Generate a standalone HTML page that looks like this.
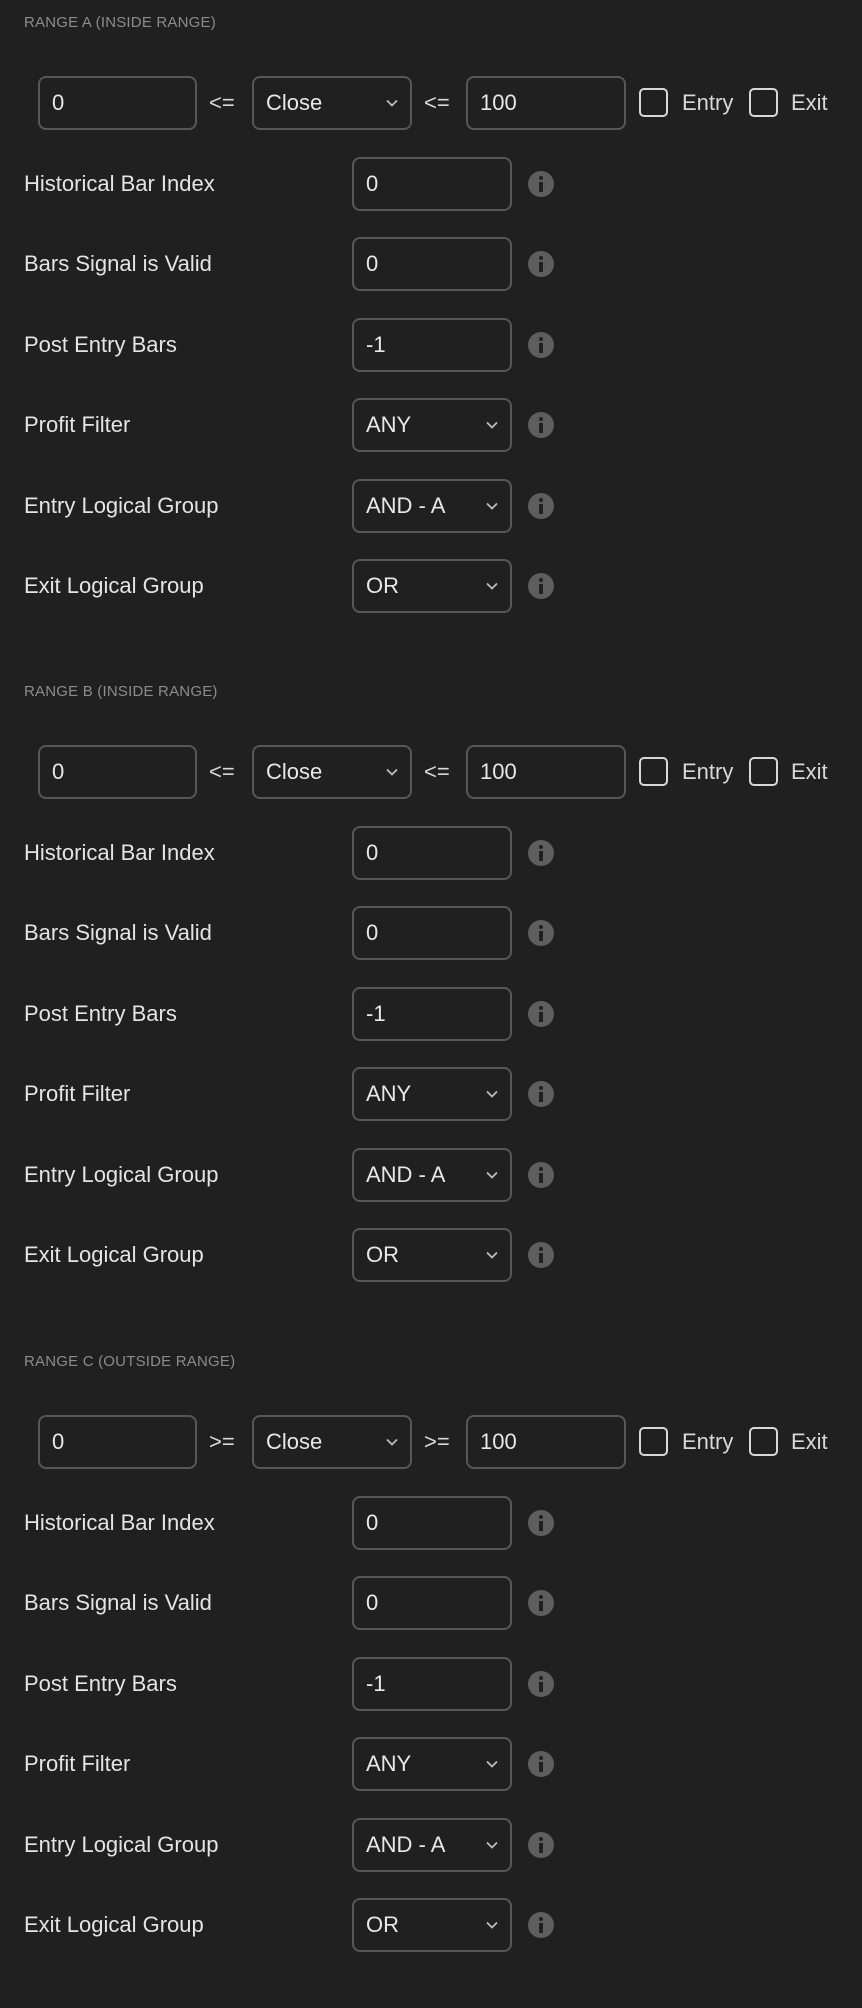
<!DOCTYPE html>
<html><head><meta charset="utf-8"><style>
*{margin:0;padding:0;box-sizing:border-box}
body{width:862px;height:2000px;background:#202020;font-family:"Liberation Sans",sans-serif;color:#e4e4e4;position:relative;overflow:hidden}
.sec{position:absolute;left:0;width:862px;height:669px}
.h{position:absolute;left:24px;top:14px;font-size:15px;color:#8c8c8c;letter-spacing:0.2px}
.box{position:absolute;height:54px;border:2px solid #575757;border-radius:8px;font-size:22px;line-height:50px;padding-left:12px;color:#e8e8e8}
.ch{position:absolute;right:12px;top:19px;width:12px;height:12px}
.op{position:absolute;font-size:22px;color:#d8d8d8;line-height:54px}
.cb{position:absolute;width:29px;height:29px;border:2px solid #d8d8d8;border-radius:5px}
.lbl{position:absolute;left:24px;font-size:22px;line-height:54px}
.info{position:absolute;left:528px;width:26px;height:26px;border-radius:50%;background:#5e5e5e}
.info:before{content:"";position:absolute;left:11px;top:5px;width:4px;height:4px;border-radius:50%;background:#202020}
.info:after{content:"";position:absolute;left:11px;top:11px;width:4px;height:10px;background:#202020}
</style></head><body>
<script>
const secs=[["RANGE A (INSIDE RANGE)","&lt;="],["RANGE B (INSIDE RANGE)","&lt;="],["RANGE C (OUTSIDE RANGE)","&gt;="]];
const rows=[["Historical Bar Index","0",0],["Bars Signal is Valid","0",0],["Post Entry Bars","-1",0],["Profit Filter","ANY",1],["Entry Logical Group","AND - A",1],["Exit Logical Group","OR",1]];
const chev='<svg class="ch" viewBox="0 0 12 12"><path d="M1 3.5L6 8.5L11 3.5" stroke="#bdbdbd" stroke-width="1.8" fill="none"/></svg>';
let h='';
secs.forEach((s,i)=>{
 h+=`<div class="sec" style="top:${Math.round(i*669.4)}px"><div class="h">${s[0]}</div>
 <div class="box" style="left:38px;top:76px;width:159px">0</div>
 <div class="op" style="left:209px;top:76px">${s[1]}</div>
 <div class="box" style="left:252px;top:76px;width:160px">Close${chev}</div>
 <div class="op" style="left:424px;top:76px">${s[1]}</div>
 <div class="box" style="left:466px;top:76px;width:160px">100</div>
 <div class="cb" style="left:639px;top:88px"></div>
 <div class="op" style="left:682px;top:76px">Entry</div>
 <div class="cb" style="left:749px;top:88px"></div>
 <div class="op" style="left:791px;top:76px">Exit</div>`;
 rows.forEach((r,j)=>{const t=157+j*80.4;
  h+=`<div class="lbl" style="top:${t}px">${r[0]}</div><div class="box" style="left:352px;top:${t}px;width:160px">${r[1]}${r[2]?chev:''}</div><div class="info" style="top:${t+14}px"></div>`;});
 h+='</div>';
});
document.write(h);
</script>
</body></html>
